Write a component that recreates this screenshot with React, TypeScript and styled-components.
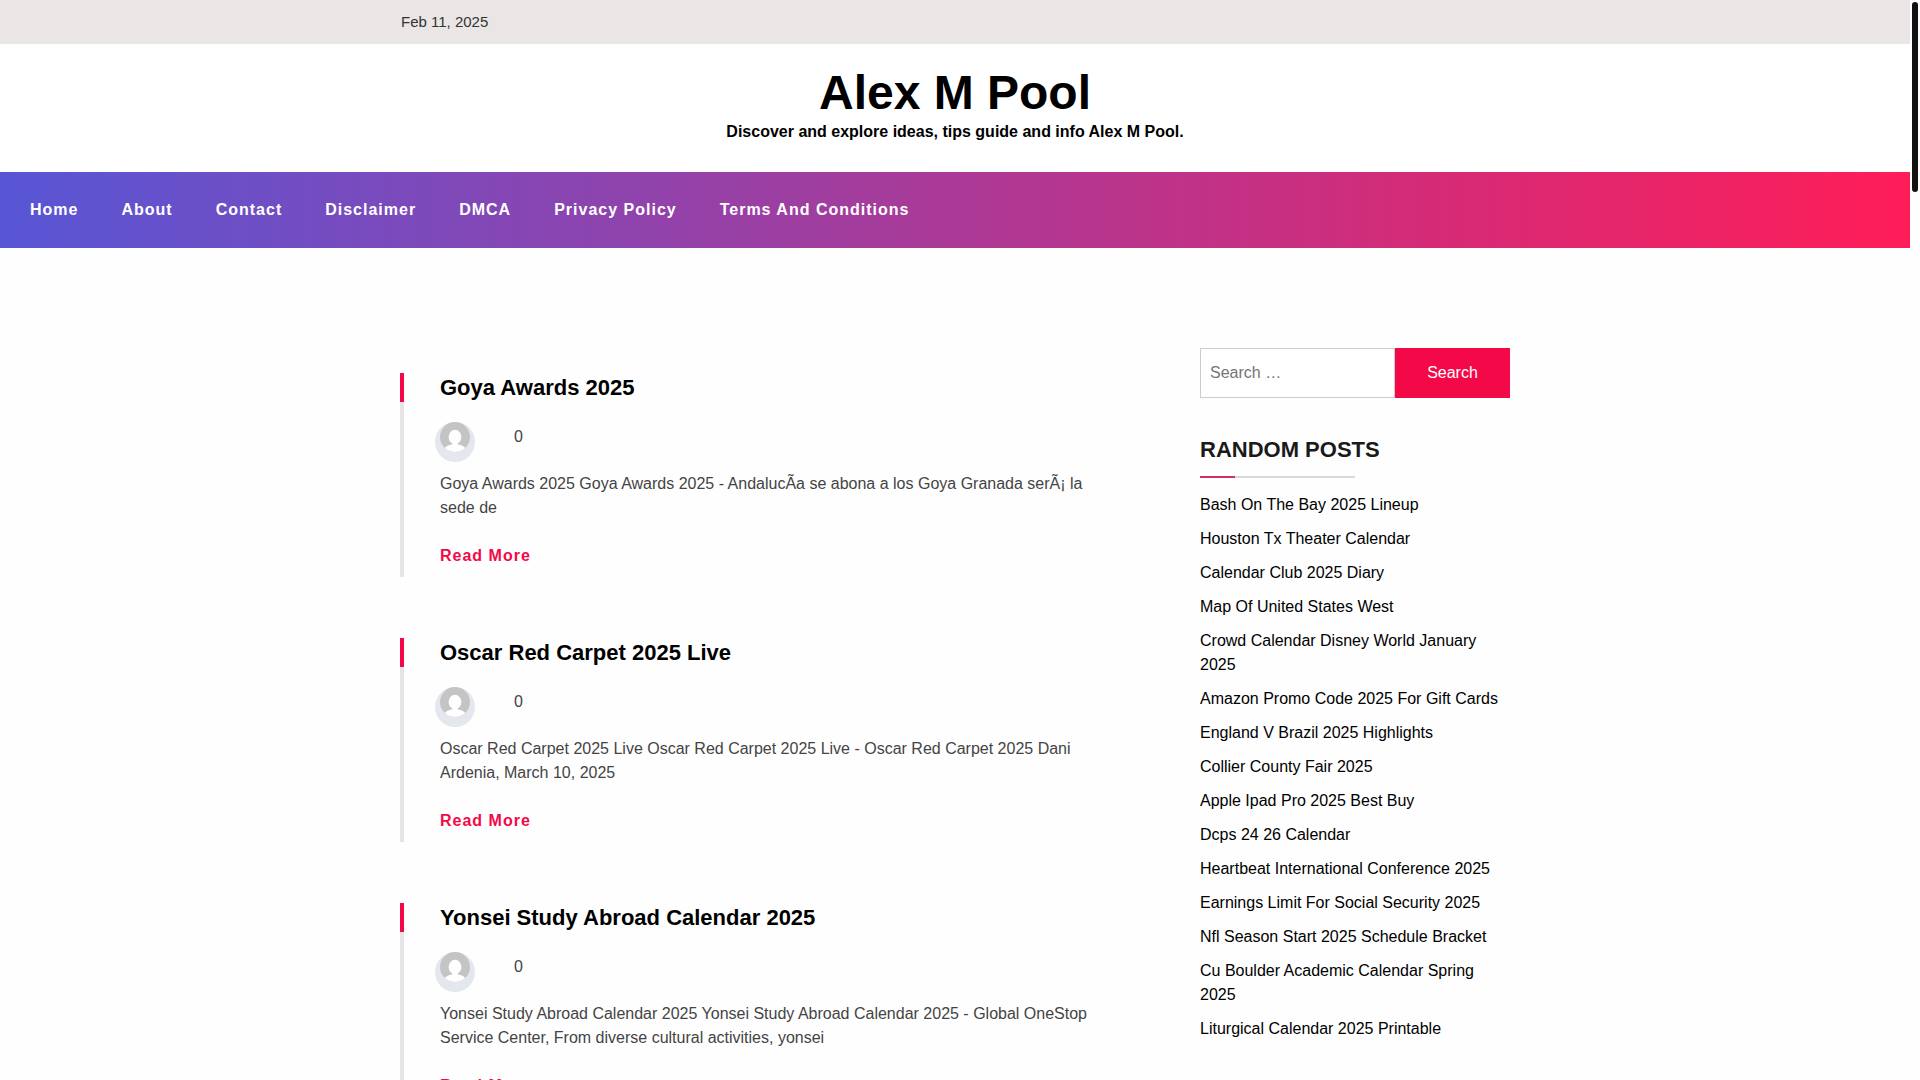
import React from "react";
import styled, { createGlobalStyle } from "styled-components";

const accent = "#f30948";

const GlobalStyle = createGlobalStyle`
  *, *::before, *::after { box-sizing: border-box; }
  html { scrollbar-width: none; }
  html::-webkit-scrollbar { display: none; }
  body {
    margin: 0;
    background: #fefefe;
    color: #444;
    font-family: "Liberation Sans", Arial, sans-serif;
    font-size: 16px;
    line-height: 24px;
    text-rendering: optimizeLegibility;
  }
  h1, h2, h3, p, ul { margin: 0; padding: 0; }
  ul { list-style: none; }
  a { color: inherit; text-decoration: none; }
`;

const Page = styled.div`
  padding-right: 10px;
`;

const ScrollThumb = styled.div`
  position: fixed;
  top: 2px;
  right: 2px;
  width: 6px;
  height: 190px;
  border-radius: 3px;
  background: #111;
`;

const Container = styled.div`
  width: 100%;
  max-width: 1110px;
  margin: 0 auto;
`;

const TopBar = styled.div`
  background: #eae6e5;
  padding: 10px 0;
`;

const DateText = styled.time`
  display: block;
  padding-left: 1px;
  font-size: 15px;
  line-height: 24px;
  color: #333;
`;

const Masthead = styled.header`
  padding: 20px 0 30px;
  background: #fff;
  color: #000;
  text-align: center;
`;

const SiteTitle = styled.h1`
  font-size: 48px;
  line-height: 58px;
`;

const Tagline = styled.p`
  font-weight: bold;
  line-height: 20px;
`;

const Nav = styled.nav`
  padding: 26px 30px;
  background: linear-gradient(to right, #5856d6, #ff1d58);
`;

const Menu = styled.ul`
  display: flex;
  flex-wrap: wrap;
  gap: 0 43px;
`;

const MenuLink = styled.a`
  color: #fff;
  font-weight: bold;
  letter-spacing: 1px;
`;

const Columns = styled(Container)`
  display: grid;
  grid-template-columns: minmax(0, 1fr) 310px;
  gap: 90px;
  padding: 100px 0;
`;

const Posts = styled.main`
  display: flex;
  flex-direction: column;
  gap: 61px;
  padding-top: 25px;
`;

const PostCard = styled.article`
  padding: 0 0 9px 40px;
  background:
    linear-gradient(${accent}, ${accent}) left top / 4px 29px no-repeat,
    linear-gradient(#e5e5e5, #e5e5e5) left top / 4px 100% no-repeat;
`;

const PostTitle = styled.h2`
  color: #000;
  font-size: 22px;
  line-height: 29px;
`;

const Meta = styled.div`
  display: flex;
  align-items: flex-start;
  gap: 39px;
  margin: 20px 0 10px -5px;
`;

const AvatarRing = styled.span`
  display: flex;
  justify-content: center;
  width: 40px;
  height: 40px;
  border-radius: 50%;
  background: #e4e8ee;
`;

const CommentCount = styled.a`
  line-height: 30px;
`;

const ReadMore = styled.a`
  display: inline-block;
  margin-top: 24px;
  color: ${accent};
  font-weight: bold;
  letter-spacing: 1px;
  vertical-align: top;
`;

const SearchForm = styled.form`
  display: flex;
  height: 50px;
`;

const SearchInput = styled.input`
  flex: 1;
  min-width: 0;
  padding: 0 9px;
  border: 1px solid #ccc;
  border-radius: 0;
  background: #fff;
  font: inherit;
  &::placeholder { color: #757575; opacity: 1; }
`;

const SearchButton = styled.button`
  width: 115px;
  padding: 0;
  border: 0;
  background: ${accent};
  color: #fff;
  font: inherit;
`;

const WidgetTitle = styled.h3`
  margin: 37px 0 15px;
  color: #1a1a1a;
  font-size: 22px;
  line-height: 29px;
  text-transform: uppercase;
  &::after {
    content: "";
    display: block;
    width: 50%;
    height: 2px;
    margin-top: 12px;
    background: linear-gradient(to right, #d42d64 35px, #d8d8d8 35px);
  }
`;

const LinkList = styled.ul`
  display: flex;
  flex-direction: column;
  gap: 10px;
  color: #000;
`;

const menu = ["Home", "About", "Contact", "Disclaimer", "DMCA", "Privacy Policy", "Terms And Conditions"];

const posts = [
  {
    title: "Goya Awards 2025",
    excerpt: "Goya Awards 2025 Goya Awards 2025 - AndalucÃ­a se abona a los Goya Granada serÃ¡ la sede de",
  },
  {
    title: "Oscar Red Carpet 2025 Live",
    excerpt: "Oscar Red Carpet 2025 Live Oscar Red Carpet 2025 Live - Oscar Red Carpet 2025 Dani Ardenia, March 10, 2025",
  },
  {
    title: "Yonsei Study Abroad Calendar 2025",
    excerpt: "Yonsei Study Abroad Calendar 2025 Yonsei Study Abroad Calendar 2025 - Global OneStop Service Center, From diverse cultural activities, yonsei",
  },
];

const randomPosts = [
  "Bash On The Bay 2025 Lineup",
  "Houston Tx Theater Calendar",
  "Calendar Club 2025 Diary",
  "Map Of United States West",
  "Crowd Calendar Disney World January 2025",
  "Amazon Promo Code 2025 For Gift Cards",
  "England V Brazil 2025 Highlights",
  "Collier County Fair 2025",
  "Apple Ipad Pro 2025 Best Buy",
  "Dcps 24 26 Calendar",
  "Heartbeat International Conference 2025",
  "Earnings Limit For Social Security 2025",
  "Nfl Season Start 2025 Schedule Bracket",
  "Cu Boulder Academic Calendar Spring 2025",
  "Liturgical Calendar 2025 Printable",
];

function Avatar({ id }: { id: string }) {
  return (
    <AvatarRing>
      <svg width="30" height="30" viewBox="0 0 30 30" aria-hidden="true">
        <clipPath id={id}>
          <circle cx="15" cy="15" r="15" />
        </clipPath>
        <g clipPath={`url(#${id})`}>
          <rect width="30" height="30" fill="#c4c4c4" />
          <ellipse cx="15" cy="15" rx="6.4" ry="7.2" fill="#fff" />
          <path d="M12.2 20h5.6v2.600c4 .5 6.700 2 8.200 4.400V32H4v-5c1.500-2.400 4.200-3.900 8.200-4.400z" fill="#fff" />
        </g>
      </svg>
    </AvatarRing>
  );
}

export default function App() {
  return (
    <>
      <GlobalStyle />
      <Page>
        <TopBar>
          <Container>
            <DateText dateTime="2025-02-11">Feb 11, 2025</DateText>
          </Container>
        </TopBar>
        <Masthead>
          <SiteTitle><a href="#home">Alex M Pool</a></SiteTitle>
          <Tagline>Discover and explore ideas, tips guide and info Alex M Pool.</Tagline>
        </Masthead>
        <Nav>
          <Menu>
            {menu.map((item) => (
              <li key={item}><MenuLink href="#menu">{item}</MenuLink></li>
            ))}
          </Menu>
        </Nav>
        <Columns>
          <Posts>
            {posts.map((post, i) => (
              <PostCard key={post.title}>
                <PostTitle><a href="#post">{post.title}</a></PostTitle>
                <Meta>
                  <Avatar id={`avatar-${i}`} />
                  <CommentCount href="#comments">0</CommentCount>
                </Meta>
                <p>{post.excerpt}</p>
                <ReadMore href="#post">Read More</ReadMore>
              </PostCard>
            ))}
          </Posts>
          <aside>
            <SearchForm role="search" onSubmit={(e) => e.preventDefault()}>
              <SearchInput type="search" aria-label="Search for" placeholder="Search …" />
              <SearchButton type="submit">Search</SearchButton>
            </SearchForm>
            <WidgetTitle>Random Posts</WidgetTitle>
            <LinkList>
              {randomPosts.map((title) => (
                <li key={title}><a href="#post">{title}</a></li>
              ))}
            </LinkList>
          </aside>
        </Columns>
      </Page>
      <ScrollThumb />
    </>
  );
}
